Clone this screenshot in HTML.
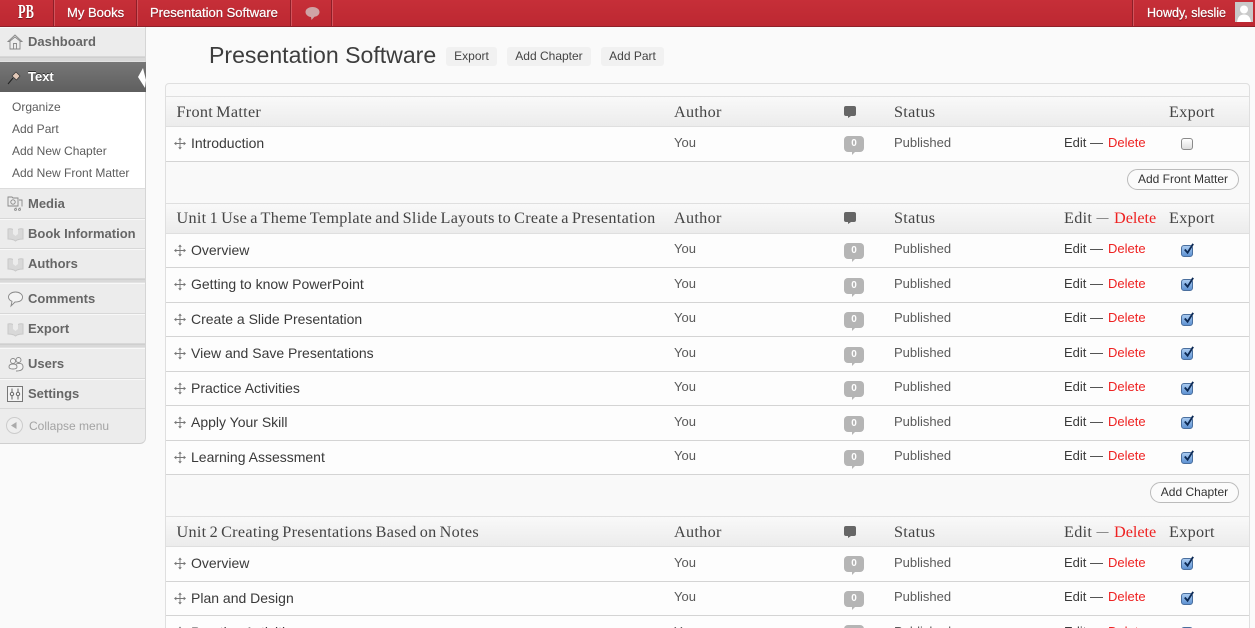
<!DOCTYPE html>
<html><head><meta charset="utf-8"><title>Presentation Software</title>
<style>
html,body{margin:0;padding:0;width:1255px;height:628px;overflow:hidden;background:#fafafa;font-family:"Liberation Sans",sans-serif;color:#333}
*{box-sizing:border-box}
#wrap{position:relative;width:1255px;height:628px;overflow:hidden}
.a{position:absolute;white-space:nowrap}
#bar{position:absolute;left:0;top:0;width:1255px;height:27px;background:linear-gradient(#c62f38,#bd2832);border-bottom:1px solid #8f2029}
.sep{position:absolute;top:0;height:26px;background:#8e1f28;border-right:1px solid #d2545c;width:2px}
.bt{position:absolute;top:3px;line-height:20px;font-size:13px;color:#fff;text-shadow:0 1px 1px #6a1219;white-space:nowrap;-webkit-text-stroke:.25px #fff}
#side{position:absolute;left:0;top:27px;width:146px;height:417px;background:#ececec;border-right:1px solid #d5d5d5;border-bottom:1px solid #cfcfcf;border-bottom-right-radius:6px}
.m{position:absolute;left:0;width:145px;border-bottom:1px solid #d8d8d8;border-top:1px solid #f8f8f8}
.ml{position:absolute;left:28px;margin-top:1px;line-height:20px;font-size:13px;font-weight:bold;color:#666;white-space:nowrap}
.sb{position:absolute;left:12px;line-height:18px;font-size:12px;color:#5c5c5c;white-space:nowrap}
.gap{position:absolute;left:0;width:145px;height:4px;background:#d9d9d9;border-top:1px solid #cfcfcf;border-bottom:1px solid #e3e3e3}
h1{position:absolute;margin:0;left:209px;top:41px;font-size:23.1px;line-height:28px;font-weight:normal;color:#3d3d3d;white-space:nowrap}
.pb{position:absolute;top:47px;height:19px;line-height:18px;background:#f1f1f1;border-radius:3px;font-size:12px;color:#444;text-align:center}
#panel{position:absolute;left:165px;top:83px;width:1085px;height:560px;background:#f9f9f9;border:1px solid #dfdfdf;border-radius:4px 4px 0 0}
.h{position:absolute;left:166px;width:1083px;height:31px;background:linear-gradient(#f9f9f9,#ececec);border-top:1px solid #dfdfdf;border-bottom:1px solid #dfdfdf}
.s{position:absolute;font-family:"Liberation Serif",serif;font-size:16.2px;line-height:20px;color:#444;white-space:nowrap;letter-spacing:.3px;word-spacing:-1.25px}
.rw{position:absolute;left:166px;width:1083px;background:#fdfdfd;border-bottom:1px solid #d4d4d4}
.t{position:absolute;left:191px;font-size:14px;line-height:20px;color:#3a3a3a;white-space:nowrap}
.c{position:absolute;margin-top:1px;font-size:13px;line-height:20px;color:#5a5a5a;white-space:nowrap}
.e{position:absolute;margin-top:1px;left:1064px;font-size:13px;line-height:20px;color:#3a3a3a;white-space:nowrap}
.d{position:absolute;margin-top:1px;left:1108px;font-size:13px;line-height:20px;color:#ee2222;white-space:nowrap}
.ab{position:absolute;height:21px;line-height:19px;border:1px solid #bbb;border-radius:11px;background:#fbfbfb;font-size:12px;color:#333;text-align:center}
.bub{position:absolute;left:844px;width:20px;height:16px;background:#b5b5b5;border-radius:4px;color:#fff;font-size:10px;font-weight:bold;line-height:16px;text-align:center}
.bub:after{content:"";position:absolute;left:8px;top:16px;border-top:3px solid #b5b5b5;border-right:3px solid transparent}
.hb{position:absolute;left:844px;width:12px;height:10px;background:#666;border-radius:2px}
.hb:after{content:"";position:absolute;left:4px;top:10px;border-top:2px solid #666;border-right:3px solid transparent}
.cb{position:absolute;left:1181px;width:12px;height:12px;border:1px solid #8a8a8a;border-radius:3px;background:linear-gradient(#fff,#ddd)}
.cb.on{background:linear-gradient(#a9cbf0,#5e92d2);border-color:#4a6f9e}
svg{position:absolute;overflow:visible}
</style></head><body>
<div id="wrap">
<svg width="0" height="0"><defs>
<symbol id="mv" viewBox="0 0 13 13"><path d="M6.500 1V12M1 6.500H12" stroke="#777" stroke-width="1" fill="none"/><path d="M6.500 0L8.500 2.500H4.500ZM6.500 13L4.500 10.500H8.500ZM0 6.500L2.500 4.500V8.500ZM13 6.500L10.500 8.500V4.500Z" fill="#777"/></symbol>
<symbol id="bk" viewBox="0 0 17 16"><path d="M1 3C3 2.500 6 3 8.500 5C11 3 14 2.500 16 3V13C14 13 11 13 8.500 15C6 13 3 13 1 13Z" fill="#d8d8d8" stroke="#c8c8c8"/><path d="M6 2H11V8L8.500 10L6 8Z" fill="#ececec"/></symbol>
<symbol id="ck" viewBox="0 0 14 14"><path d="M3 7L6 10.500L12 1" stroke="#0d2a55" stroke-width="2" fill="none"/></symbol>
</defs></svg>

<div id="bar">
<div class="bt" style="left:18px;top:2px;font-family:'Liberation Serif',serif;font-size:20px;font-weight:bold;transform:scaleX(.62);transform-origin:left;-webkit-text-stroke:0">PB</div>
<div class="sep" style="left:53px"></div>
<div class="bt" style="left:67px">My Books</div>
<div class="sep" style="left:136px"></div>
<div class="bt" style="left:150px">Presentation Software</div>
<div class="sep" style="left:290px"></div>
<svg style="left:305px;top:6px" width="15" height="15" viewBox="0 0 15 15"><path d="M7.500 1C3.500 1 .5 3.200 .5 6C.5 8.800 3.500 11 6 11L6.500 14L9.500 10.800C12.500 10.300 14.500 8.500 14.500 6C14.500 3.200 11.500 1 7.500 1Z" fill="#cfa3a5"/></svg>
<div class="sep" style="left:331px"></div>
<div class="sep" style="left:1132px"></div>
<div class="bt" style="left:1147px;font-size:12.5px">Howdy, sleslie</div>
<svg style="left:1235px;top:2px" width="18" height="20" viewBox="0 0 18 20"><rect width="18" height="20" fill="#c9c9c9"/><circle cx="9" cy="7.500" r="4" fill="#fff"/><path d="M2 20Q3 12.500 9 12.500Q15 12.500 16 20Z" fill="#fff"/></svg>
</div>

<div id="side">
<div class="m" style="top:0;height:30px"></div>
<svg style="left:7px;top:7px" width="16" height="16" viewBox="0 0 16 16"><path d="M8 1L1 7.500H3V15H13V7.500H15ZM6.500 15V9.500H9.500V15M3 7L8 3L13 7" fill="#eee" stroke="#888" stroke-width=".9"/></svg>
<div class="ml" style="top:4px">Dashboard</div>
<div class="gap" style="top:30px;height:5px"></div>
<div class="a" style="left:0;top:35px;width:146px;height:30px;background:linear-gradient(#777,#5f5f5f)"></div>
<svg style="left:7px;top:43px" width="15" height="15" viewBox="0 0 15 15"><path d="M1 14L6 8" stroke="#222" stroke-width="1"/><path d="M5 6L9 2L13 6L9.500 10Z" fill="#e3c9b8" stroke="#333" stroke-width=".7"/></svg>
<div class="ml" style="top:39px;color:#fff;text-shadow:0 -1px 0 #333">Text</div>
<svg style="left:138px;top:38px" width="8" height="24" viewBox="0 0 8 24"><path d="M5 3L0 12L7 23L8 15Z" fill="#fff"/></svg>
<div class="a" style="left:0;top:65px;width:145px;height:96px;background:#fff"></div>
<div class="sb" style="top:71px">Organize</div>
<div class="sb" style="top:93px">Add Part</div>
<div class="sb" style="top:115px">Add New Chapter</div>
<div class="sb" style="top:137px">Add New Front Matter</div>
<div class="m" style="top:161px;height:31px;border-top:1px solid #dcdcdc"></div>
<svg style="left:7px;top:168px" width="16" height="16" viewBox="0 0 16 16"><path d="M1 2H5L6 3H11V11H1ZM12 5H15V11.500M9 12.500V14.500M13 12.500V14.500" fill="none" stroke="#888" stroke-width=".9"/><circle cx="6" cy="7" r="2.200" fill="none" stroke="#888" stroke-width=".9"/><circle cx="8.500" cy="14.500" r="1" fill="none" stroke="#888" stroke-width=".8"/><circle cx="12.500" cy="14.500" r="1" fill="none" stroke="#888" stroke-width=".8"/></svg>
<div class="ml" style="top:166px">Media</div>
<div class="m" style="top:192px;height:30px"></div>
<svg style="left:7px;top:199px" width="17" height="16"><use href="#bk"/></svg>
<div class="ml" style="top:196px">Book Information</div>
<div class="m" style="top:222px;height:30px"></div>
<svg style="left:7px;top:229px" width="17" height="16"><use href="#bk"/></svg>
<div class="ml" style="top:226px">Authors</div>
<div class="gap" style="top:252px"></div>
<div class="m" style="top:256px;height:31px"></div>
<svg style="left:8px;top:264px" width="15" height="16" viewBox="0 0 15 16"><path d="M7.500 1C3.500 1 .5 3.300 .5 6C.5 8 2 9.500 4 10.300L3 15L7 11Q14.500 11 14.500 6C14.500 3.300 11.500 1 7.500 1Z" fill="#f3f3f3" stroke="#888" stroke-width=".9"/></svg>
<div class="ml" style="top:261px">Comments</div>
<div class="m" style="top:287px;height:30px"></div>
<svg style="left:7px;top:294px" width="17" height="16"><use href="#bk"/></svg>
<div class="ml" style="top:291px">Export</div>
<div class="gap" style="top:317px"></div>
<div class="m" style="top:321px;height:31px"></div>
<svg style="left:8px;top:329px" width="16" height="16" viewBox="0 0 16 16"><circle cx="5" cy="5" r="2.500" fill="#f3f3f3" stroke="#888" stroke-width=".9"/><circle cx="10.500" cy="4" r="2.500" fill="#f3f3f3" stroke="#888" stroke-width=".9"/><path d="M1 11Q1 8 5 8Q9 8 9 11Q9 13 5 13Q1 13 1 11ZM8 8Q15 6 15 11Q15 15 8 15" fill="#f3f3f3" stroke="#888" stroke-width=".9"/></svg>
<div class="ml" style="top:326px">Users</div>
<div class="m" style="top:352px;height:30px"></div>
<svg style="left:7px;top:359px" width="16" height="16" viewBox="0 0 16 16"><rect x=".5" y=".5" width="15" height="15" fill="#f3f3f3" stroke="#777"/><path d="M5 2.500V6M5 10V13.500M11 2.500V6M11 10V13.500" stroke="#666"/><circle cx="5" cy="8" r="1.700" fill="none" stroke="#666"/><circle cx="11" cy="8" r="1.700" fill="none" stroke="#666"/></svg>
<div class="ml" style="top:356px">Settings</div>
<svg style="left:6px;top:390px" width="17" height="17" viewBox="0 0 17 17"><circle cx="8.500" cy="8.500" r="8" fill="#eee" stroke="#ccc"/><path d="M5 8.500L10.500 5V12Z" fill="#aaa"/></svg>
<div class="ml" style="left:29px;top:389px;margin-top:0;font-weight:normal;font-size:12px;color:#a3a3a3">Collapse menu</div>
</div>

<h1>Presentation Software</h1>
<div class="pb" style="left:446px;width:51px">Export</div>
<div class="pb" style="left:507px;width:84px">Add Chapter</div>
<div class="pb" style="left:601px;width:63px">Add Part</div>

<div id="panel"></div>

<!-- Front Matter -->
<div class="h" style="top:96px"></div>
<div class="s" style="left:176.500px;top:102px">Front Matter</div>
<div class="s" style="left:674px;top:102px">Author</div>
<div class="hb" style="top:106px"></div>
<div class="s" style="left:894px;top:102px">Status</div>
<div class="s" style="left:1169px;top:102px">Export</div>
<div class="rw" style="top:127px;height:35px"></div>
<svg style="left:174px;top:137px" width="12" height="13"><use href="#mv"/></svg>
<div class="t" style="top:133px">Introduction</div>
<div class="c" style="left:674px;top:132px">You</div>
<div class="bub" style="top:136px">0</div>
<div class="c" style="left:894px;top:132px">Published</div>
<div class="e" style="top:132px">Edit —</div><div class="d" style="top:132px">Delete</div>
<div class="cb" style="top:138px"></div>
<div class="ab" style="left:1127px;top:169px;width:112px">Add Front Matter</div>

<!-- Unit 1 -->
<div class="h" style="top:203px"></div>
<div class="s" style="left:176.500px;top:208px">Unit 1 Use a Theme Template and Slide Layouts to Create a Presentation</div>
<div class="s" style="left:674px;top:208px">Author</div>
<div class="hb" style="top:212px"></div>
<div class="s" style="left:894px;top:208px">Status</div>
<div class="s" style="left:1064px;top:208px">Edit</div><div class="s" style="left:1096.500px;top:207px;font-size:12px;letter-spacing:0">—</div><div class="s" style="left:1114px;top:208px;color:#ee2222;letter-spacing:0">Delete</div>
<div class="s" style="left:1169px;top:208px">Export</div>

<div class="rw" style="top:234px;height:34px"></div>
<svg style="left:174px;top:244px" width="12" height="13"><use href="#mv"/></svg>
<div class="t" style="top:240px">Overview</div>
<div class="c" style="left:674px;top:238px">You</div>
<div class="bub" style="top:243px">0</div>
<div class="c" style="left:894px;top:238px">Published</div>
<div class="e" style="top:238px">Edit —</div><div class="d" style="top:238px">Delete</div>
<div class="cb on" style="top:245px"></div><svg style="left:1182px;top:243px" width="13" height="13"><use href="#ck"/></svg>

<div class="rw" style="top:268px;height:35px"></div>
<svg style="left:174px;top:278px" width="12" height="13"><use href="#mv"/></svg>
<div class="t" style="top:274px">Getting to know PowerPoint</div>
<div class="c" style="left:674px;top:273px">You</div>
<div class="bub" style="top:278px">0</div>
<div class="c" style="left:894px;top:273px">Published</div>
<div class="e" style="top:273px">Edit —</div><div class="d" style="top:273px">Delete</div>
<div class="cb on" style="top:279px"></div><svg style="left:1182px;top:277px" width="13" height="13"><use href="#ck"/></svg>

<div class="rw" style="top:303px;height:34px"></div>
<svg style="left:174px;top:313px" width="12" height="13"><use href="#mv"/></svg>
<div class="t" style="top:309px">Create a Slide Presentation</div>
<div class="c" style="left:674px;top:307px">You</div>
<div class="bub" style="top:312px">0</div>
<div class="c" style="left:894px;top:307px">Published</div>
<div class="e" style="top:307px">Edit —</div><div class="d" style="top:307px">Delete</div>
<div class="cb on" style="top:314px"></div><svg style="left:1182px;top:312px" width="13" height="13"><use href="#ck"/></svg>

<div class="rw" style="top:337px;height:35px"></div>
<svg style="left:174px;top:347px" width="12" height="13"><use href="#mv"/></svg>
<div class="t" style="top:343px">View and Save Presentations</div>
<div class="c" style="left:674px;top:342px">You</div>
<div class="bub" style="top:347px">0</div>
<div class="c" style="left:894px;top:342px">Published</div>
<div class="e" style="top:342px">Edit —</div><div class="d" style="top:342px">Delete</div>
<div class="cb on" style="top:348px"></div><svg style="left:1182px;top:346px" width="13" height="13"><use href="#ck"/></svg>

<div class="rw" style="top:372px;height:34px"></div>
<svg style="left:174px;top:382px" width="12" height="13"><use href="#mv"/></svg>
<div class="t" style="top:378px">Practice Activities</div>
<div class="c" style="left:674px;top:376px">You</div>
<div class="bub" style="top:381px">0</div>
<div class="c" style="left:894px;top:376px">Published</div>
<div class="e" style="top:376px">Edit —</div><div class="d" style="top:376px">Delete</div>
<div class="cb on" style="top:383px"></div><svg style="left:1182px;top:381px" width="13" height="13"><use href="#ck"/></svg>

<div class="rw" style="top:406px;height:35px"></div>
<svg style="left:174px;top:416px" width="12" height="13"><use href="#mv"/></svg>
<div class="t" style="top:412px">Apply Your Skill</div>
<div class="c" style="left:674px;top:411px">You</div>
<div class="bub" style="top:416px">0</div>
<div class="c" style="left:894px;top:411px">Published</div>
<div class="e" style="top:411px">Edit —</div><div class="d" style="top:411px">Delete</div>
<div class="cb on" style="top:417px"></div><svg style="left:1182px;top:415px" width="13" height="13"><use href="#ck"/></svg>

<div class="rw" style="top:441px;height:34px"></div>
<svg style="left:174px;top:451px" width="12" height="13"><use href="#mv"/></svg>
<div class="t" style="top:447px">Learning Assessment</div>
<div class="c" style="left:674px;top:445px">You</div>
<div class="bub" style="top:450px">0</div>
<div class="c" style="left:894px;top:445px">Published</div>
<div class="e" style="top:445px">Edit —</div><div class="d" style="top:445px">Delete</div>
<div class="cb on" style="top:452px"></div><svg style="left:1182px;top:450px" width="13" height="13"><use href="#ck"/></svg>

<div class="ab" style="left:1150px;top:482px;width:89px">Add Chapter</div>

<!-- Unit 2 -->
<div class="h" style="top:516px"></div>
<div class="s" style="left:176.500px;top:522px">Unit 2 Creating Presentations Based on Notes</div>
<div class="s" style="left:674px;top:522px">Author</div>
<div class="hb" style="top:526px"></div>
<div class="s" style="left:894px;top:522px">Status</div>
<div class="s" style="left:1064px;top:522px">Edit</div><div class="s" style="left:1096.500px;top:521px;font-size:12px;letter-spacing:0">—</div><div class="s" style="left:1114px;top:522px;color:#ee2222;letter-spacing:0">Delete</div>
<div class="s" style="left:1169px;top:522px">Export</div>

<div class="rw" style="top:547px;height:35px"></div>
<svg style="left:174px;top:557px" width="12" height="13"><use href="#mv"/></svg>
<div class="t" style="top:553px">Overview</div>
<div class="c" style="left:674px;top:552px">You</div>
<div class="bub" style="top:556px">0</div>
<div class="c" style="left:894px;top:552px">Published</div>
<div class="e" style="top:552px">Edit —</div><div class="d" style="top:552px">Delete</div>
<div class="cb on" style="top:558px"></div><svg style="left:1182px;top:556px" width="13" height="13"><use href="#ck"/></svg>

<div class="rw" style="top:582px;height:34px"></div>
<svg style="left:174px;top:592px" width="12" height="13"><use href="#mv"/></svg>
<div class="t" style="top:588px">Plan and Design</div>
<div class="c" style="left:674px;top:586px">You</div>
<div class="bub" style="top:591px">0</div>
<div class="c" style="left:894px;top:586px">Published</div>
<div class="e" style="top:586px">Edit —</div><div class="d" style="top:586px">Delete</div>
<div class="cb on" style="top:593px"></div><svg style="left:1182px;top:591px" width="13" height="13"><use href="#ck"/></svg>

<div class="rw" style="top:616px;height:35px"></div>
<svg style="left:174px;top:626px" width="12" height="13"><use href="#mv"/></svg>
<div class="t" style="top:622px">Practice Activities</div>
<div class="c" style="left:674px;top:621px">You</div>
<div class="bub" style="top:625px">0</div>
<div class="c" style="left:894px;top:621px">Published</div>
<div class="e" style="top:621px">Edit —</div><div class="d" style="top:621px">Delete</div>
<div class="cb on" style="top:627px"></div>
</div>
</body></html>
